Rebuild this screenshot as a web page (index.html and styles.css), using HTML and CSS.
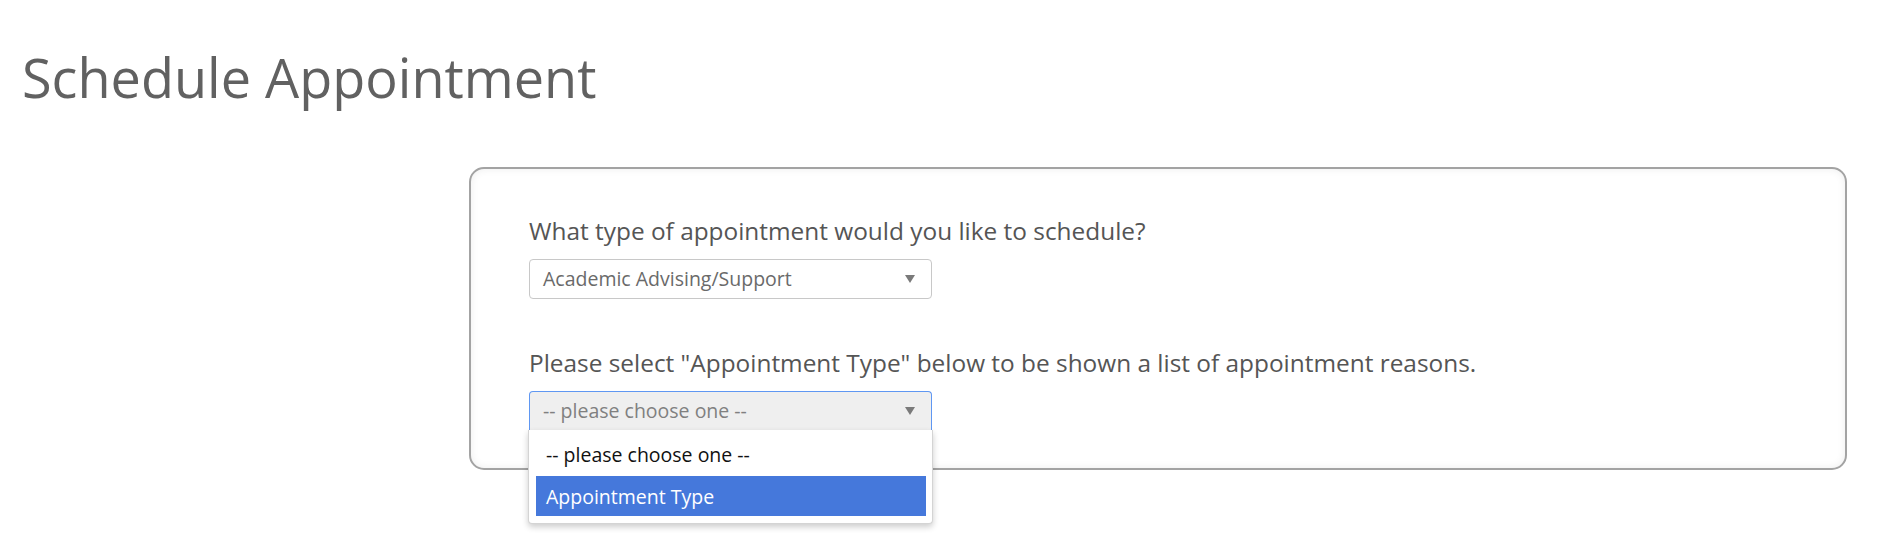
FILE: index.html
```html
<!DOCTYPE html>
<html lang="en">
<head>
<meta charset="utf-8">
<title>Schedule Appointment</title>
<link rel="stylesheet" href="styles.css">
</head>
<body>
  <h1 class="page-title">Schedule Appointment</h1>
  <section class="card">
    <div class="field">
      <label class="field-label">What type of appointment would you like to schedule?</label>
      <div class="select">
        <span class="select-value">Academic Advising/Support</span>
        <span class="select-arrow"></span>
      </div>
    </div>
    <div class="field field-second">
      <label class="field-label">Please select "Appointment Type" below to be shown a list of appointment reasons.</label>
      <div class="select-wrap">
        <div class="select select-open">
          <span class="select-value placeholder">-- please choose one --</span>
          <span class="select-arrow"></span>
        </div>
        <ul class="dropdown">
          <li class="option option-first">-- please choose one --</li>
          <li class="option option-active">Appointment Type</li>
        </ul>
      </div>
    </div>
  </section>
</body>
</html>
```

FILE: styles.css
```css
html, body {
  margin: 0;
  padding: 0;
  background: #ffffff;
}

body {
  min-height: 555px;
  font-family: "Open Sans", "Noto Sans", "Liberation Sans", sans-serif;
  color: #555555;
}

.page-title {
  margin: 0;
  padding: 46px 0 0 22px;
  font-size: 54px;
  font-weight: 400;
  line-height: 62px;
  color: #616161;
}

.card {
  margin: 59px 43px 0 469px;
  padding: 45px 58px 37px 58px;
  border: 2px solid #a3a3a3;
  border-radius: 15px;
  box-shadow: inset 0 0 9px rgba(0, 0, 0, 0.07);
  display: flex;
  flex-direction: column;
  gap: 47px;
}

.field {
  display: flex;
  flex-direction: column;
  gap: 12px;
}

.field-label {
  font-size: 24.4px;
  line-height: 33px;
  color: #555555;
}

.select-wrap {
  position: relative;
  width: 403px;
}

.select {
  box-sizing: border-box;
  width: 403px;
  height: 40px;
  border: 1px solid #c8c8c8;
  border-radius: 4px;
  background: #ffffff;
  display: flex;
  align-items: center;
  justify-content: space-between;
  padding: 0 16px 0 13px;
}

.select-value {
  font-size: 19.5px;
  color: #6a6a6a;
  line-height: 1;
}

.select-value.placeholder {
  color: #808080;
}

.select-arrow {
  width: 0;
  height: 0;
  border-left: 5px solid transparent;
  border-right: 5px solid transparent;
  border-top: 8px solid #7a7a7a;
}

.select-open {
  background: #efefef;
  border: 1px solid #5f97f2;
  border-bottom-color: #efefef;
  border-radius: 4px 4px 0 0;
}

.dropdown {
  position: absolute;
  z-index: 5;
  left: -1px;
  top: 39px;
  width: 405px;
  box-sizing: border-box;
  margin: 0;
  padding: 5px 6px 7px 7px;
  list-style: none;
  background: #ffffff;
  border: 1px solid #d4d4d4;
  border-top: none;
  border-radius: 0 0 4px 4px;
  box-shadow: 0 3px 6px rgba(0, 0, 0, 0.2);
}

.option {
  height: 40px;
  display: flex;
  align-items: center;
  padding-left: 10px;
  font-size: 19.5px;
  color: #111111;
}

.option-first {
  height: 41px;
  padding-bottom: 2px;
  box-sizing: border-box;
}

.option-active {
  background: #4578db;
  color: #ffffff;
}
```
